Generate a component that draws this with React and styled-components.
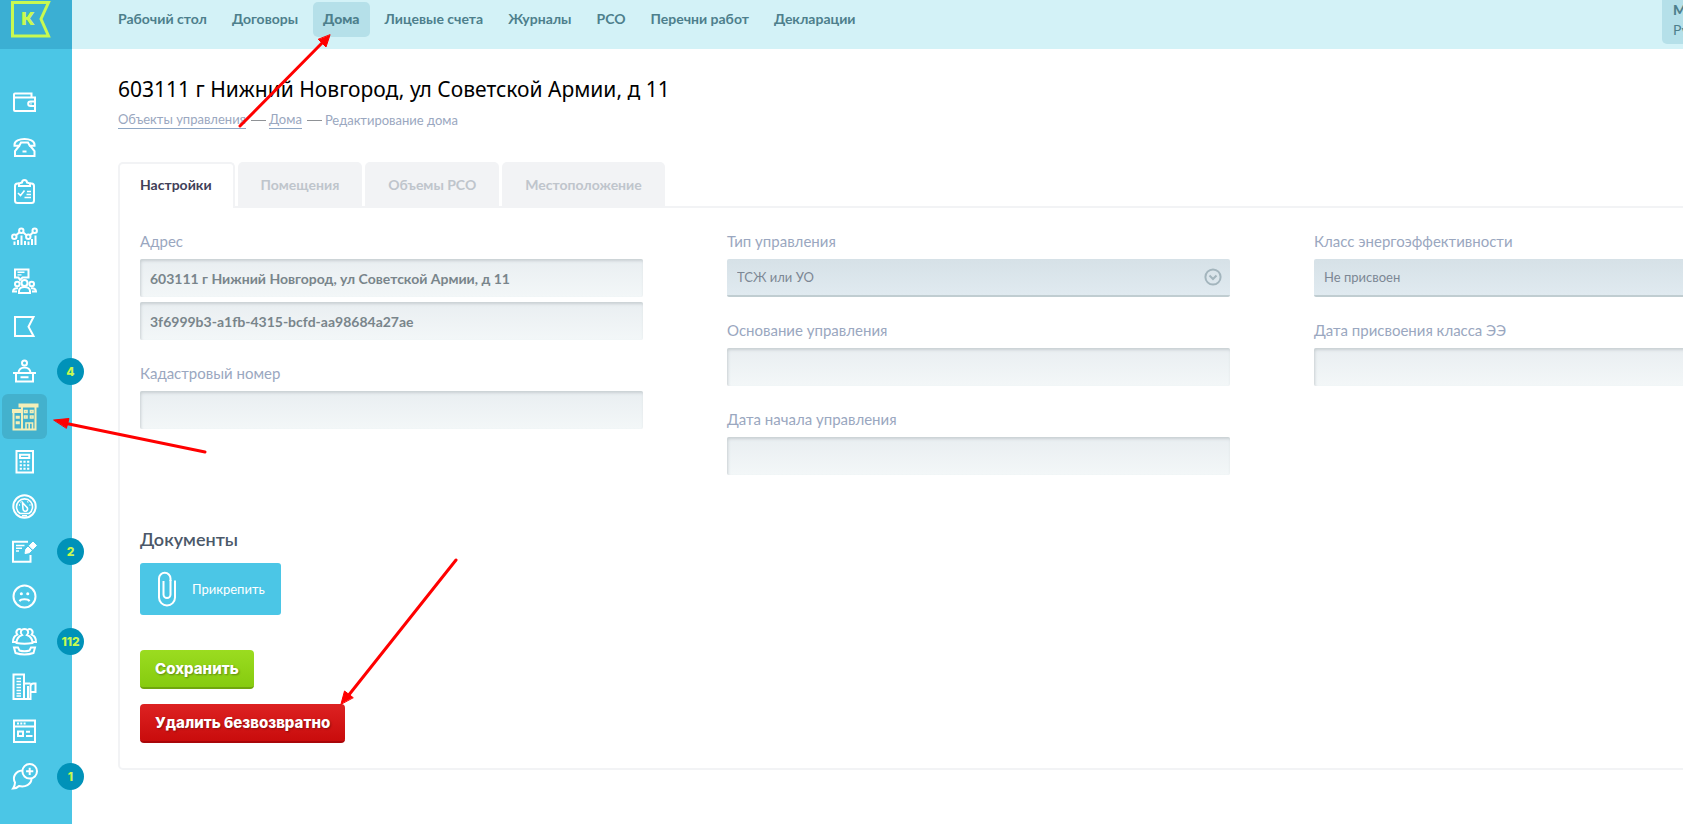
import React, { useState } from "react";
import styled, { createGlobalStyle } from "styled-components";

const cores = {
    menu: "#4bc6e6",
    menuLogo: "#3bafd3",
    badge: "#0092b9",
    lima: "#c8f951",
    topo: "#d3f2f7",
    topoAtivo: "#b5e0e9",
    topoTexto: "#4d7f8c",
    borda: "#f2f3f5",
    label: "#9aa7c0",
    seta: "#ff0000",
};

const menuSuperior = [
    "Рабочий стол",
    "Договоры",
    "Дома",
    "Лицевые счета",
    "Журналы",
    "РСО",
    "Перечни работ",
    "Декларации",
];

const abas = ["Настройки", "Помещения", "Объемы РСО", "Местоположение"];

// desenhos do menu lateral, todos em uma caixa de 45x45
const icones = {
    carteira: (
        <>
            <path d="M29.5 18.500V14.500H13a1 1 0 0 0-1 1V31a1 1 0 0 0 1 1H33V18.500H12.500" />
            <path d="M33 22.500H28.500a2.300 2.300 0 0 0 0 4.600H33M28.500 24.800h1" />
        </>
    ),
    telefone: (
        <>
            <path d="M12.500 20.500c0-7.500 20-7.500 20 0v1.200h-4.800l-1.700-3.200h-7l-1.700 3.200h-4.800z" />
            <path d="M17.500 21.500 13 27v5h19.500v-5L28 21.500M20.500 27.500h4" />
        </>
    ),
    tarefas: (
        <>
            <path d="M17 14.500h-1.500a2.500 2.500 0 0 0-2.500 2.500v14.500a2.500 2.500 0 0 0 2.500 2.500h14a2.500 2.500 0 0 0 2.500-2.500V17a2.500 2.500 0 0 0-2.500-2.500H28" />
            <path d="M17 17v-2.500l3-1a2.500 2.500 0 0 1 5 0l3 1V17z" />
            <path strokeWidth="1.6" d="M16 24l2.500 2.500 4-5M25 22.500h4M24.500 25.500h4.500M22.500 28.500h6.500" />
        </>
    ),
    grafico: (
        <>
            <circle cx="12.3" cy="22.7" r="2.2" />
            <circle cx="19.3" cy="16.7" r="2.2" />
            <circle cx="26.3" cy="22.7" r="2.2" />
            <circle cx="32.7" cy="16.7" r="2.2" />
            <path d="m14 21.300 3.500-3.100M21 18.200l3.500 3M28 21.300l3.200-3.100" />
            <path d="M12.500 27.500V31M16 26v5M19.500 21.500V31M23 27V31M26.500 27.500V31M30 25v6M33.500 21.500V31" />
        </>
    ),
    reuniao: (
        <>
            <path d="M13 10.500h13.500v8h-6L18 21l-1.500-2.500H13z" />
            <path strokeWidth="1.4" d="M15.500 13.300h7M15.500 15.900h4" />
            <circle cx="22.5" cy="24" r="3" />
            <circle cx="15.3" cy="25" r="2.3" />
            <circle cx="29.7" cy="25" r="2.3" />
            <path d="M17 34v-2c0-5.500 11-5.500 11 0v2zM16 29.300c-3-.5-5 .8-5 3.200h4M29 29.300c3-.5 5 .8 5 3.200h-4" />
        </>
    ),
    bandeira: <path d="M13 13h18.500l-5 9.700 5 9.300H13z" />,
    balcao: (
        <>
            <circle cx="22.5" cy="14" r="2.5" />
            <path d="M16.500 24c0-7.500 12-7.500 12 0M11 24h23M14 24v8.500h17V24M18.500 28.300h8" />
        </>
    ),
    predios: (
        <>
            <path d="M17.500 10.500h18v2h-18zM20 12.500V35.500h13.500V12.500M10 16h8v2H10M11.500 18.500v17H20" />
            <path strokeWidth="1.6" d="M24 35.500v-6.500h6.500v6.500M27.200 29v6.500M22.500 16.500h2.500v2h-2.500zM28.500 16.500h2.500v2h-2.500zM22.500 22h2.500v2h-2.500zM28.500 22h2.500v2h-2.500zM14.500 22.500h2.500v1.500h-2.500zM14.500 28h2.500v1.500h-2.500z" />
        </>
    ),
    calculadora: (
        <>
            <path d="M14.500 12h16.500v21.500h-16.500zM18 15.700h9.300v3.300H18z" />
            <path strokeDasharray="2.2 1.5" d="M17.700 22.700h10M17.700 26.200h10M17.700 29.700h10" />
        </>
    ),
    medidor: (
        <>
            <circle cx="22.5" cy="22.5" r="11.2" />
            <path strokeWidth="1.6" d="M18 29.500a8 8 0 1 1 9 0zM20 31.700h5" />
            <path strokeWidth="1.6" d="m20.500 18.500 4 4.500a2.300 2.300 0 1 1-3.500 2zM17 21h1M18.500 17.800l.5.500M26 17.500l-.5.800M27.500 21h1" />
        </>
    ),
    edicao: (
        <>
            <path d="M26 12.800H11v20h17.500V26" />
            <path strokeWidth="1.6" d="M14 16.500h8.500M14 19.300h6M14 22h3" />
            <path fill="currentColor" strokeWidth="1" d="m23 24.500.8-4.300 2.200-2.200 3.500 3.500-2.200 2.200zM27.200 16.800 31 13l3.500 3.500-3.800 3.800z" />
        </>
    ),
    triste: (
        <>
            <circle cx="22.5" cy="22.5" r="11" />
            <path strokeWidth="3" strokeLinecap="round" d="M19.300 19.700h.1M25.700 19.700h.1" />
            <path d="M17.500 27.200c1.500-2.500 8.500-2.500 10 0" />
        </>
    ),
    grupo: (
        <>
            <path d="M20 16c-2.500-2.500-1-6 2.500-6s5 3.500 2.500 6c4 1.500 5.500 4 5.500 8-5 1-11 1-16 0 0-4 1.500-6.500 5.500-8z" />
            <path d="M19 10.500c-3.500-1.500-6 2-3.700 5.200-3 1.300-4.300 3.800-4.300 7.300h3.500M26 10.500c3.500-1.500 6 2 3.700 5.200 3 1.300 4.300 3.800 4.300 7.300h-3.500" />
            <path d="M12 28.500h4l1.500 3c3 1 7 1 10 0l1.500-3h4l-1.500 5.500c-6 2-12 2-18 0z" />
        </>
    ),
    torre: (
        <>
            <path d="M11.500 10.500h10.500v24.500h-10.500z" />
            <path strokeWidth="1.6" d="M14.500 14.500h4.500M14.500 17.500h4.500M14.500 20.500h4.500M14.500 23.500h4.500M14.500 26.500h4.500M14.500 29.500h4.500M14.500 32h4.500" />
            <path d="M22 19.500h6.500M28.500 28V22.500a3 3 0 0 1 3-3h2V28zM28.500 28V35H22M26 22v13" />
        </>
    ),
    janela: (
        <>
            <path d="M12 11.500h21v21.500H12zM12 17.500h21M16 22.500h5v4.500h-5zM24 22.800h4M24 27h6.500" />
            <path strokeDasharray="2 1.3" d="M15 14.500h9" />
        </>
    ),
    mensagem: (
        <>
            <circle cx="27.7" cy="17.3" r="7.3" />
            <path d="M27.700 13.700v7.200M24.100 17.300h7.200" />
            <path d="M20.500 16.500c-7 .5-10.500 6.500-7.500 12 0 2.500-.5 4-2 6 3 0 4.500-.8 6-2.500 6 1.500 12.500-1.500 12.500-7.500" />
        </>
    ),
};

const menuLateral = [
    { nome: "Платежи", icone: "carteira" },
    { nome: "Звонки", icone: "telefone" },
    { nome: "Задачи", icone: "tarefas" },
    { nome: "Отчеты", icone: "grafico" },
    { nome: "Собрания", icone: "reuniao" },
    { nome: "Объявления", icone: "bandeira" },
    { nome: "Обращения", icone: "balcao", total: 4 },
    { nome: "Дома", icone: "predios" },
    { nome: "Расчеты", icone: "calculadora" },
    { nome: "Счетчики", icone: "medidor" },
    { nome: "Заявки", icone: "edicao", total: 2 },
    { nome: "Должники", icone: "triste" },
    { nome: "Жители", icone: "grupo", total: 112 },
    { nome: "Организация", icone: "torre" },
    { nome: "Сайт", icone: "janela" },
    { nome: "Сообщения", icone: "mensagem", total: 1 },
];

function MenuLateral() {
    const [ativo, setAtivo] = useState("predios");

    return (
        <Lateral>
            <Logo href="#" aria-label="К">
                <svg width="72" height="49" viewBox="0 0 72 49">
                    <path d="M12.500 2.500H48.500L41 19l7.500 17H12.500z" fill="none" stroke={cores.lima} strokeWidth="3" />
                    <text x="28" y="25" textAnchor="middle" fontFamily="Inter, sans-serif" fontSize="18" fontWeight="900" fill={cores.lima}>К</text>
                </svg>
            </Logo>
            <ListaIcones>
                {menuLateral.map((item) => (
                    <ItemLateral key={item.icone}>
                        <BotaoIcone
                            aria-label={item.nome}
                            $ativo={ativo === item.icone}
                            onClick={() => setAtivo(item.icone)}
                        >
                            <svg width="45" height="45" viewBox="0 0 45 45">{icones[item.icone]}</svg>
                        </BotaoIcone>
                        {item.total && <Badge>{item.total}</Badge>}
                    </ItemLateral>
                ))}
            </ListaIcones>
        </Lateral>
    );
}

function Campo({ id, label, children }) {
    return (
        <GrupoCampo>
            <Label htmlFor={id}>{label}</Label>
            {children}
        </GrupoCampo>
    );
}

function Selecao({ id, opcoes }) {
    return (
        <CaixaSelect>
            <Select id={id}>
                {opcoes.map((o) => <option key={o}>{o}</option>)}
            </Select>
            <IconeSelect width="18" height="18" viewBox="0 0 18 18">
                <circle cx="9" cy="9" r="7.6" />
                <path d="m5.500 7.500 3.500 3.500 3.500-3.500" />
            </IconeSelect>
        </CaixaSelect>
    );
}

// setas de instrucao por cima da tela
function Setas() {
    return (
        <CamadaSetas width="480" height="720" viewBox="0 0 480 720">
            <path d="M240 126 324 41M205 452 64 423M456 560 348 696" />
            <path className="ponta" d="M330 35 326 47 318.500 39.500zM54 420 69 418.500 66.500 428zM341 704 344.500 691 353 697.500z" />
        </CamadaSetas>
    );
}

export default function App() {
    const [aba, setAba] = useState(abas[0]);

    return (
        <>
            <Global />
            <Tela>
                <MenuLateral />
                <Conteudo>
                    <Topo>
                        <Navegacao>
                            {menuSuperior.map((nome) => (
                                <LinkTopo key={nome} href="#" $ativo={nome === "Дома"}>{nome}</LinkTopo>
                            ))}
                        </Navegacao>
                        <Usuario>
                            <NomeUsuario>М</NomeUsuario>
                            <span>Ру</span>
                        </Usuario>
                    </Topo>
                    <Principal>
                        <Titulo>603111 г Нижний Новгород, ул Советской Армии, д 11</Titulo>
                        <Caminho>
                            <LinkCaminho href="#">Объекты управления</LinkCaminho>
                            <Traco />
                            <LinkCaminho href="#">Дома</LinkCaminho>
                            <Traco />
                            <span>Редактирование дома</span>
                        </Caminho>
                        <Abas role="tablist">
                            {abas.map((nome) => (
                                <Aba
                                    key={nome}
                                    role="tab"
                                    aria-selected={aba === nome}
                                    $ativo={aba === nome}
                                    onClick={() => setAba(nome)}
                                >
                                    {nome}
                                </Aba>
                            ))}
                        </Abas>
                        <Painel>
                            <Colunas>
                                <Coluna>
                                    <Campo id="endereco" label="Адрес">
                                        <Input id="endereco" defaultValue="603111 г Нижний Новгород, ул Советской Армии, д 11" />
                                        <Input aria-label="ФИАС" defaultValue="3f6999b3-a1fb-4315-bcfd-aa98684a27ae" />
                                    </Campo>
                                    <Campo id="cadastro" label="Кадастровый номер">
                                        <Input id="cadastro" />
                                    </Campo>
                                </Coluna>
                                <Coluna>
                                    <Campo id="tipo" label="Тип управления">
                                        <Selecao id="tipo" opcoes={["ТСЖ или УО"]} />
                                    </Campo>
                                    <Campo id="base" label="Основание управления">
                                        <Input id="base" />
                                    </Campo>
                                    <Campo id="inicio" label="Дата начала управления">
                                        <Input id="inicio" />
                                    </Campo>
                                </Coluna>
                                <Coluna>
                                    <Campo id="classe" label="Класс энергоэффективности">
                                        <Selecao id="classe" opcoes={["Не присвоен"]} />
                                    </Campo>
                                    <Campo id="dataClasse" label="Дата присвоения класса ЭЭ">
                                        <Input id="dataClasse" />
                                    </Campo>
                                </Coluna>
                            </Colunas>
                            <Subtitulo>Документы</Subtitulo>
                            <BotaoAnexar>
                                <svg width="20" height="36" viewBox="0 0 20 36">
                                    <path d="M13.500 10V7.500a5.600 5.600 0 0 0-11.500 0V26.500a8 8 0 0 0 16 0V9.500" />
                                    <path d="M13.500 9v14.500a3.500 3.500 0 0 1-7 0V10" />
                                </svg>
                                Прикрепить
                            </BotaoAnexar>
                            <Acoes>
                                <BotaoSalvar>Сохранить</BotaoSalvar>
                                <BotaoExcluir>Удалить безвозвратно</BotaoExcluir>
                            </Acoes>
                        </Painel>
                    </Principal>
                </Conteudo>
                <Setas />
            </Tela>
        </>
    );
}

// ESTILOS

const Global = createGlobalStyle`
    * { box-sizing: border-box; }
    body {
        margin: 0;
        background: #ffffff;
        font-family: Lato, "Open Sans", sans-serif;
        font-size: 14px;
    }
    button, input, select { font-family: inherit; }
`;

const Tela = styled.div`
    position: relative;
    display: flex;
    min-height: 100vh;
    overflow-x: clip;
`;

const Lateral = styled.aside`
    flex: 0 0 72px;
    background: ${cores.menu};
`;

const Logo = styled.a`
    display: block;
    height: 49px;
    background: ${cores.menuLogo};
`;

const ListaIcones = styled.ul`
    list-style: none;
    margin: 30px 0 0;
    padding: 0 2px;
`;

const ItemLateral = styled.li`
    position: relative;
    height: 45px;
`;

const BotaoIcone = styled.button`
    display: block;
    width: 45px;
    height: 45px;
    padding: 0;
    border: none;
    border-radius: 6px;
    cursor: pointer;
    color: ${({ $ativo }) => ($ativo ? "#f4efb8" : "#ffffff")};
    background: ${({ $ativo }) => ($ativo ? "#43b1cd" : "transparent")};

    svg {
        display: block;
        fill: none;
        stroke: currentColor;
        stroke-width: 2;
    }
`;

const Badge = styled.span`
    position: absolute;
    top: 9px;
    right: -14px;
    width: 27px;
    height: 27px;
    border-radius: 50%;
    background: ${cores.badge};
    color: ${cores.lima};
    font: 800 12px/27px Inter, sans-serif;
    text-align: center;
`;

const Conteudo = styled.div`
    flex: 1 0 auto;
    min-width: 1812px;
`;

const Topo = styled.header`
    display: flex;
    justify-content: space-between;
    align-items: flex-start;
    height: 49px;
    padding: 0 45px 0 36px;
    background: ${cores.topo};
    color: ${cores.topoTexto};
`;

const Navegacao = styled.nav`
    display: flex;
    gap: 5px;
    padding-top: 2px;
`;

const LinkTopo = styled.a`
    padding: 0 10px 2px;
    border-radius: 5px;
    line-height: 33px;
    font-weight: ${({ $ativo }) => ($ativo ? 900 : 700)};
    color: inherit;
    text-decoration: none;
    background: ${({ $ativo }) => ($ativo ? cores.topoAtivo : "transparent")};
`;

const Usuario = styled.div`
    display: flex;
    flex-direction: column;
    width: 177px;
    height: 44px;
    padding: 0 11px;
    border-radius: 0 0 5px 5px;
    background: ${cores.topoAtivo};
    line-height: 20px;
`;

const NomeUsuario = styled.strong`
    font-weight: 900;
`;

const Principal = styled.main`
    padding: 26px 45px 54px 46px;
`;

const Titulo = styled.h1`
    margin: 0;
    font: 400 21px/28px "Noto Sans", sans-serif;
    color: #000000;
`;

const Caminho = styled.nav`
    display: flex;
    align-items: center;
    height: 20px;
    margin: 7px 0 32px;
    font-size: 13px;
    line-height: 17px;
    color: ${cores.label};
`;

const LinkCaminho = styled.a`
    color: inherit;
    text-decoration: none;
    border-bottom: 1px solid #8ea6c4;
`;

const Traco = styled.span`
    width: 15px;
    height: 1px;
    margin: 0 3px 0 5px;
    background: #8f9296;
`;

const Abas = styled.div`
    display: flex;
    align-items: flex-end;
    gap: 3px;
`;

const Aba = styled.button`
    height: 44px;
    padding: 0 23px;
    border: none;
    border-radius: 5px 5px 0 0;
    font-size: 14px;
    font-weight: 700;
    cursor: pointer;
    color: #bfc5cc;
    background: ${cores.borda};

    ${({ $ativo }) => $ativo && `
        height: 46px;
        margin-bottom: -2px;
        padding: 0 21px 4px 20px;
        border: 2px solid ${cores.borda};
        border-bottom: none;
        color: #3f4058;
        background: #ffffff;
    `}
`;

const Painel = styled.section`
    border: 2px solid ${cores.borda};
    border-radius: 0 5px 5px 5px;
    padding: 21px 20px 25px;
`;

const Colunas = styled.div`
    display: grid;
    grid-template-columns: repeat(3, 1fr);
    gap: 84px;
`;

const Coluna = styled.div`
    display: flex;
    flex-direction: column;
    gap: 21px;
`;

const GrupoCampo = styled.div`
    display: flex;
    flex-direction: column;
    gap: 5px;
`;

const Label = styled.label`
    height: 25px;
    font-size: 15px;
    line-height: 24px;
    color: ${cores.label};
`;

const Input = styled.input`
    width: 100%;
    height: 38px;
    padding: 0 10px;
    border: none;
    border-radius: 2px;
    font-size: 14px;
    font-weight: 700;
    color: #79858b;
    background: linear-gradient(#e9eef1, #f3f7f8);
    box-shadow: inset 1px 2px 3px #c9d0d3;
`;

const CaixaSelect = styled.div`
    position: relative;
`;

const Select = styled.select`
    appearance: none;
    display: block;
    width: 100%;
    height: 38px;
    padding: 0 40px 0 10px;
    border: none;
    border-bottom: 2px solid #c0cdd1;
    border-radius: 2px;
    font-size: 13px;
    color: #7c8794;
    background: linear-gradient(#d6e1e7, #e0eaf0);
`;

const IconeSelect = styled.svg`
    position: absolute;
    top: 9px;
    right: 8px;
    fill: none;
    stroke: #a3b5bd;
    stroke-width: 2;
    pointer-events: none;
`;

const Subtitulo = styled.h2`
    margin: 52px 0 12px;
    font-size: 18px;
    font-weight: 600;
    line-height: 24px;
    color: #4b5869;
`;

const BotaoAnexar = styled.button`
    display: flex;
    align-items: center;
    gap: 15px;
    height: 52px;
    padding: 0 16px 0 17px;
    border: none;
    border-radius: 3px;
    font-size: 13px;
    color: #ffffff;
    background: ${cores.menu};
    cursor: pointer;

    svg {
        fill: none;
        stroke: #ffffff;
        stroke-width: 2;
    }
`;

const Acoes = styled.div`
    display: flex;
    flex-direction: column;
    align-items: flex-start;
    gap: 15px;
    margin-top: 35px;
`;

const Botao = styled.button`
    height: 39px;
    padding: 0 15px;
    border: none;
    border-bottom: 2px solid;
    border-radius: 4px;
    font: 800 15px Inter, sans-serif;
    color: #ffffff;
    text-shadow: 1px 1px 2px rgba(0, 0, 0, 0.35);
    cursor: pointer;
`;

const BotaoSalvar = styled(Botao)`
    border-color: #6fa60d;
    background: linear-gradient(#9bdc20, #86cb0f);
`;

const BotaoExcluir = styled(Botao)`
    border-color: #a90609;
    background: linear-gradient(#dd2222, #c90c0c);
`;

const CamadaSetas = styled.svg`
    position: absolute;
    top: 0;
    left: 0;
    pointer-events: none;
    fill: none;
    stroke: ${cores.seta};
    stroke-width: 3;
    stroke-linecap: round;

    .ponta {
        fill: ${cores.seta};
        stroke-width: 1;
    }
`;
